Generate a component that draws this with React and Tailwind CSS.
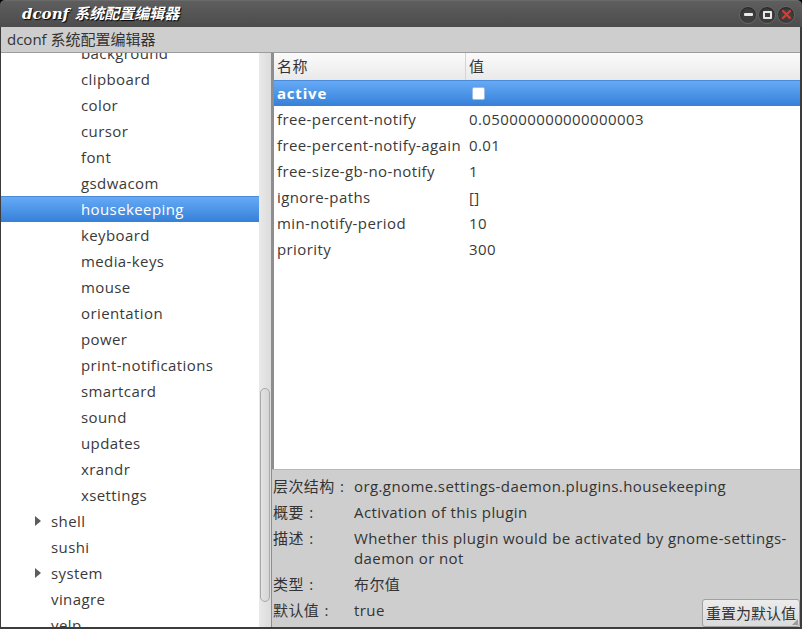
import React from "react";

const treeItems = [
  { t: "background", d: 1 },
  { t: "clipboard", d: 1 },
  { t: "color", d: 1 },
  { t: "cursor", d: 1 },
  { t: "font", d: 1 },
  { t: "gsdwacom", d: 1 },
  { t: "housekeeping", d: 1, sel: true },
  { t: "keyboard", d: 1 },
  { t: "media-keys", d: 1 },
  { t: "mouse", d: 1 },
  { t: "orientation", d: 1 },
  { t: "power", d: 1 },
  { t: "print-notifications", d: 1 },
  { t: "smartcard", d: 1 },
  { t: "sound", d: 1 },
  { t: "updates", d: 1 },
  { t: "xrandr", d: 1 },
  { t: "xsettings", d: 1 },
  { t: "shell", d: 0, arrow: true },
  { t: "sushi", d: 0 },
  { t: "system", d: 0, arrow: true },
  { t: "vinagre", d: 0 },
  { t: "yelp", d: 0 },
];

const keys = [
  ["free-percent-notify", "0.050000000000000003"],
  ["free-percent-notify-again", "0.01"],
  ["free-size-gb-no-notify", "1"],
  ["ignore-paths", "[]"],
  ["min-notify-period", "10"],
  ["priority", "300"],
];

function WinBtn({ children }) {
  return (
    <div className="w-[18px] h-[18px] rounded-full bg-[#3e3e3e] border border-[#666] shadow-[inset_0_1px_2px_rgba(0,0,0,0.5)] flex items-center justify-center">
      {children}
    </div>
  );
}

function Label({ text }) {
  return (
    <div className="w-[81px] shrink-0 flex">
      <span>{text}</span>
      <span className="inline-block w-[15px] text-center">:</span>
    </div>
  );
}

export default function App() {
  const font = { fontFamily: '"Open Sans", "Noto Sans CJK SC", sans-serif' };
  return (
    <div
      className="w-[802px] h-[629px] bg-black flex flex-col overflow-hidden text-[#3a3a3a] text-[15px] tracking-[0.4px]"
      style={font}
    >
      {/* title bar */}
      <div className="h-[27px] shrink-0 rounded-t-[5px] bg-gradient-to-b from-[#5e5e5e] to-[#4c4c4c] flex items-center justify-between pl-[22px] pr-[7px] border-t border-[#6a6a6a]">
        <div
          className="text-white italic font-bold text-[15px] leading-none [text-shadow:1px_1px_1px_#000] tracking-normal"
          style={{ fontFamily: '"DejaVu Serif", "Noto Sans CJK SC", serif' }}
        >
          dconf 系统配置编辑器
        </div>
        <div className="flex items-center gap-[1px] mt-[1px]">
          <WinBtn>
            <div className="w-[9px] h-[3px] bg-[#e8e8e8] rounded-[1px]" />
          </WinBtn>
          <WinBtn>
            <div className="w-[9px] h-[8px] border-2 border-[#e8e8e8] rounded-[1px]" />
          </WinBtn>
          <WinBtn>
            <svg width="11" height="11" viewBox="0 0 11 11">
              <path d="M2 2 L9 9 M9 2 L2 9" stroke="#e0392b" strokeWidth="2.4" strokeLinecap="round" />
            </svg>
          </WinBtn>
        </div>
      </div>

      {/* body with borders */}
      <div className="flex-1 flex flex-col bg-[#3c3c3c] pl-[1px] pr-[2px] pb-[2px] min-h-0">
        {/* menu bar */}
        <div className="h-[26px] shrink-0 bg-[#cecece] border-b border-[#9c9c9c] flex items-center pl-[6px] text-[15px] tracking-normal text-[#333]">
          dconf 系统配置编辑器
        </div>

        <div className="flex-1 flex min-h-0 bg-white">
          {/* left tree */}
          <div className="w-[258px] shrink-0 overflow-hidden bg-white">
            <div className="mt-[-13px]">
              {treeItems.map((it) => (
                <div
                  key={it.t}
                  className={
                    "h-[26px] flex items-center relative " +
                    (it.sel
                      ? "bg-gradient-to-b from-[#65aaf6] to-[#3580d8] text-white border-t border-[#4a8ad8]"
                      : "")
                  }
                >
                  {it.arrow && (
                    <svg className="absolute left-[34px] top-[8px]" width="6" height="10" viewBox="0 0 6 10">
                      <path d="M0 0 L6 5 L0 10 Z" fill="#5c5c5c" />
                    </svg>
                  )}
                  <span className={it.d === 1 ? "pl-[80px]" : "pl-[50px]"}>{it.t}</span>
                </div>
              ))}
            </div>
          </div>
          {/* scrollbar */}
          <div className="w-[12px] shrink-0 bg-gradient-to-r from-[#e9e9e9] to-[#dcdcdc] flex flex-col pt-[335px] pl-[1px]">
            <div className="w-[10px] h-[214px] rounded-full bg-gradient-to-r from-[#e2e2e2] to-[#d6d6d6] border border-[#a8a8a8]" />
          </div>
          {/* divider */}
          <div className="w-[3px] shrink-0 bg-[#8e8e8e]" />

          {/* right pane */}
          <div className="flex-1 flex flex-col min-w-0">
            <div className="flex-1 bg-white">
              <div className="h-[27px] flex items-center bg-gradient-to-b from-[#fbfbfb] to-[#e9e9e9] text-[#333]">
                <div className="w-[192px] pl-[3px] h-full flex items-center border-r border-[#d4d4d4]">名称</div>
                <div className="pl-[3px]">值</div>
              </div>
              <div className="h-[26px] flex items-center bg-gradient-to-b from-[#65aaf6] to-[#3580d8] text-white border-t border-[#4a8ad8]">
                <div className="w-[193px] pl-[3px] font-bold tracking-[0.8px]">active</div>
                <div className="pl-[5px]">
                  <div className="w-[13px] h-[13px] bg-white rounded-[2px] border border-[#9bbce6]" />
                </div>
              </div>
              {keys.map(([k, v]) => (
                <div key={k} className="h-[26px] flex items-center">
                  <div className="w-[193px] pl-[3px] whitespace-nowrap">{k}</div>
                  <div className="pl-[2px] whitespace-nowrap">{v}</div>
                </div>
              ))}
            </div>
            {/* info panel */}
            <div className="h-[158px] shrink-0 bg-[#cecece] border-t border-[#b8b8b8] pt-[3px] text-[#333] whitespace-nowrap ml-[-2px] pl-[1px]">
              <div className="flex py-[3px] leading-[20px]">
                <Label text="层次结构" />
                <div>org.gnome.settings-daemon.plugins.housekeeping</div>
              </div>
              <div className="flex py-[3px] leading-[20px]">
                <Label text="概要" />
                <div>Activation of this plugin</div>
              </div>
              <div className="flex py-[3px] leading-[20px]">
                <Label text="描述" />
                <div>
                  Whether this plugin would be activated by gnome-settings-
                  <br />
                  daemon or not
                </div>
              </div>
              <div className="flex py-[3px] leading-[20px]">
                <Label text="类型" />
                <div>布尔值</div>
              </div>
              <div className="flex pt-[3px] leading-[20px]">
                <Label text="默认值" />
                <div>true</div>
                <div className="ml-auto mt-[-1px] h-[28px] px-[3px] flex items-center bg-gradient-to-b from-[#ececec] to-[#dadada] border border-[#a0a0a0] rounded-[3px] text-[15px] tracking-normal relative">
                  重置为默认值
                  <svg className="absolute right-[1px] bottom-[1px]" width="6" height="6" viewBox="0 0 6 6">
                    <path d="M6 0 L6 6 L0 6 Z" fill="#9a9a9a" />
                  </svg>
                </div>
              </div>
            </div>
          </div>
        </div>
      </div>
    </div>
  );
}
